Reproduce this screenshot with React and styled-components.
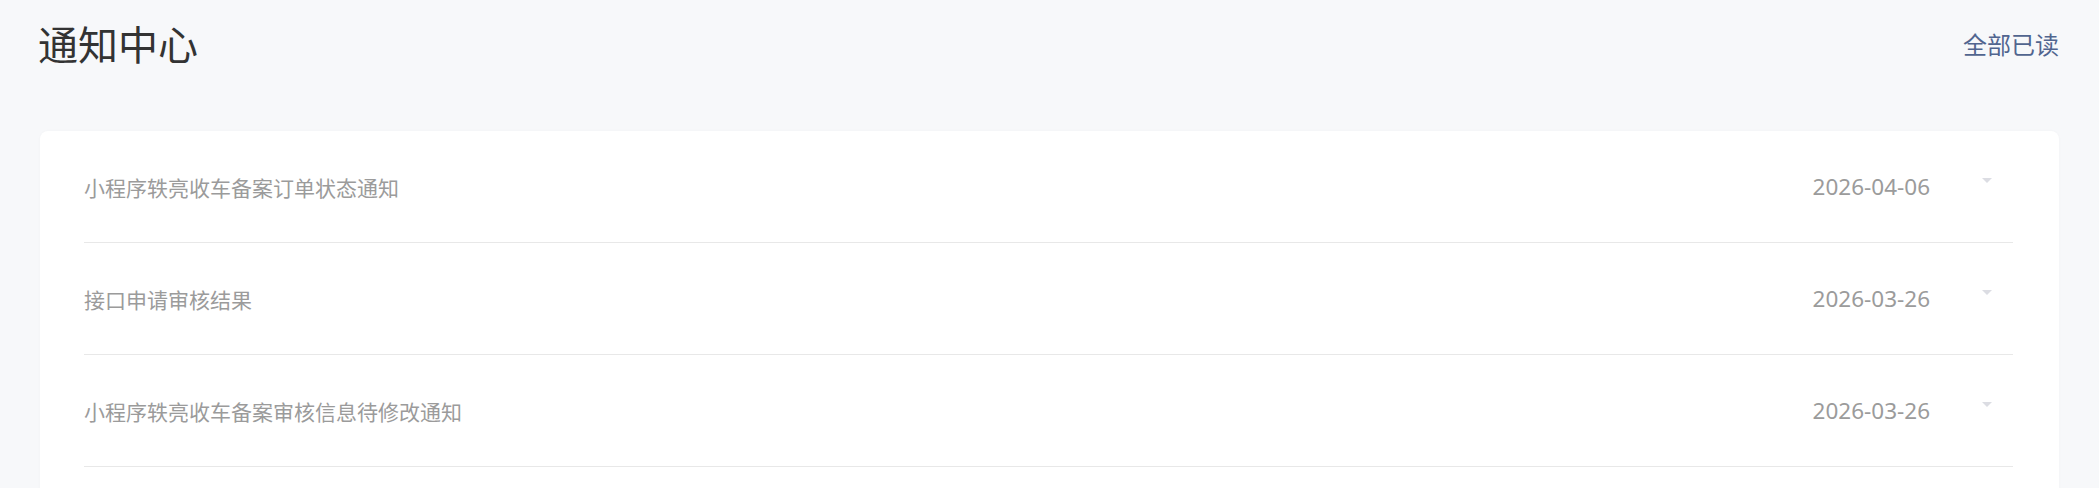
import React from 'react';
import styled, { createGlobalStyle } from 'styled-components';

const notices = [
  { title: '小程序轶亮收车备案订单状态通知', date: '2026-04-06' },
  { title: '接口申请审核结果', date: '2026-03-26' },
  { title: '小程序轶亮收车备案审核信息待修改通知', date: '2026-03-26' },
  { title: '小程序轶亮收车备案订单状态通知', date: '2026-03-20' },
];

const WATERMARK = 'PMGHDCb5eL7';

function App() {
  const marks = Array.from({ length: 8 * 8 });

  return (
    <>
      <GlobalStyle />
      <Page>
        <Header>
          <Title>通知中心</Title>
          <ReadAll>全部已读</ReadAll>
        </Header>

        <Card>
          {notices.map((n, i) => (
            <Row key={i}>
              <RowTitle>{n.title}</RowTitle>
              <RowRight>
                <DateText>{n.date}</DateText>
                <Caret />
              </RowRight>
            </Row>
          ))}
        </Card>

        <Watermark>
          {marks.map((_, i) => (
            <Mark key={i}>{WATERMARK}</Mark>
          ))}
        </Watermark>
      </Page>
    </>
  );
}

export default App;

const GlobalStyle = createGlobalStyle`
  html, body {
    margin: 0;
    padding: 0;
    background: #f7f8fa;
  }
  body {
    font-family: "Noto Sans", "Noto Sans CJK SC", sans-serif;
    overflow: hidden;
  }
`;

const Page = styled.div`
  position: relative;
  min-height: 488px;
  padding: 0 40px 0 38px;
  overflow: hidden;
`;

const Header = styled.div`
  display: flex;
  align-items: center;
  justify-content: space-between;
  height: 90px;
  padding-right: 0;
`;

const Title = styled.h1`
  margin: 0;
  font-size: 40px;
  font-weight: 400;
  color: #333333;
  line-height: 1;
`;

const ReadAll = styled.span`
  font-size: 24px;
  color: #51658f;
  cursor: pointer;
  line-height: 1;
`;

const Card = styled.div`
  margin: 41px 0 0 2px;
  background: #ffffff;
  border-radius: 8px;
  padding: 0 46px 40px 44px;
  box-shadow: 0 0 3px rgba(0, 0, 0, 0.03);
`;

const Row = styled.div`
  display: flex;
  align-items: center;
  justify-content: space-between;
  height: 111px;
  border-bottom: 1px solid #e8e8e8;
`;

const RowTitle = styled.span`
  font-size: 21px;
  color: #9b9b9b;
`;

const RowRight = styled.div`
  display: flex;
  align-items: center;
  gap: 52px;
  padding-right: 21px;
`;

const DateText = styled.span`
  font-size: 22.5px;
  color: #9b9b9b;
`;

const Caret = styled.span`
  width: 0;
  height: 0;
  margin-top: -12px;
  border-left: 5.5px solid transparent;
  border-right: 5.5px solid transparent;
  border-top: 5px solid #dcdde3;
`;

const Watermark = styled.div`
  position: absolute;
  top: 0;
  left: -38px;
  display: grid;
  grid-template-columns: repeat(8, 323px);
  grid-auto-rows: 70px;
  pointer-events: none;
`;

const Mark = styled.span`
  font-family: "Liberation Sans", sans-serif;
  font-size: 20px;
  line-height: 20px;
  color: rgba(0, 0, 0, 0.025);
  white-space: nowrap;
`;
